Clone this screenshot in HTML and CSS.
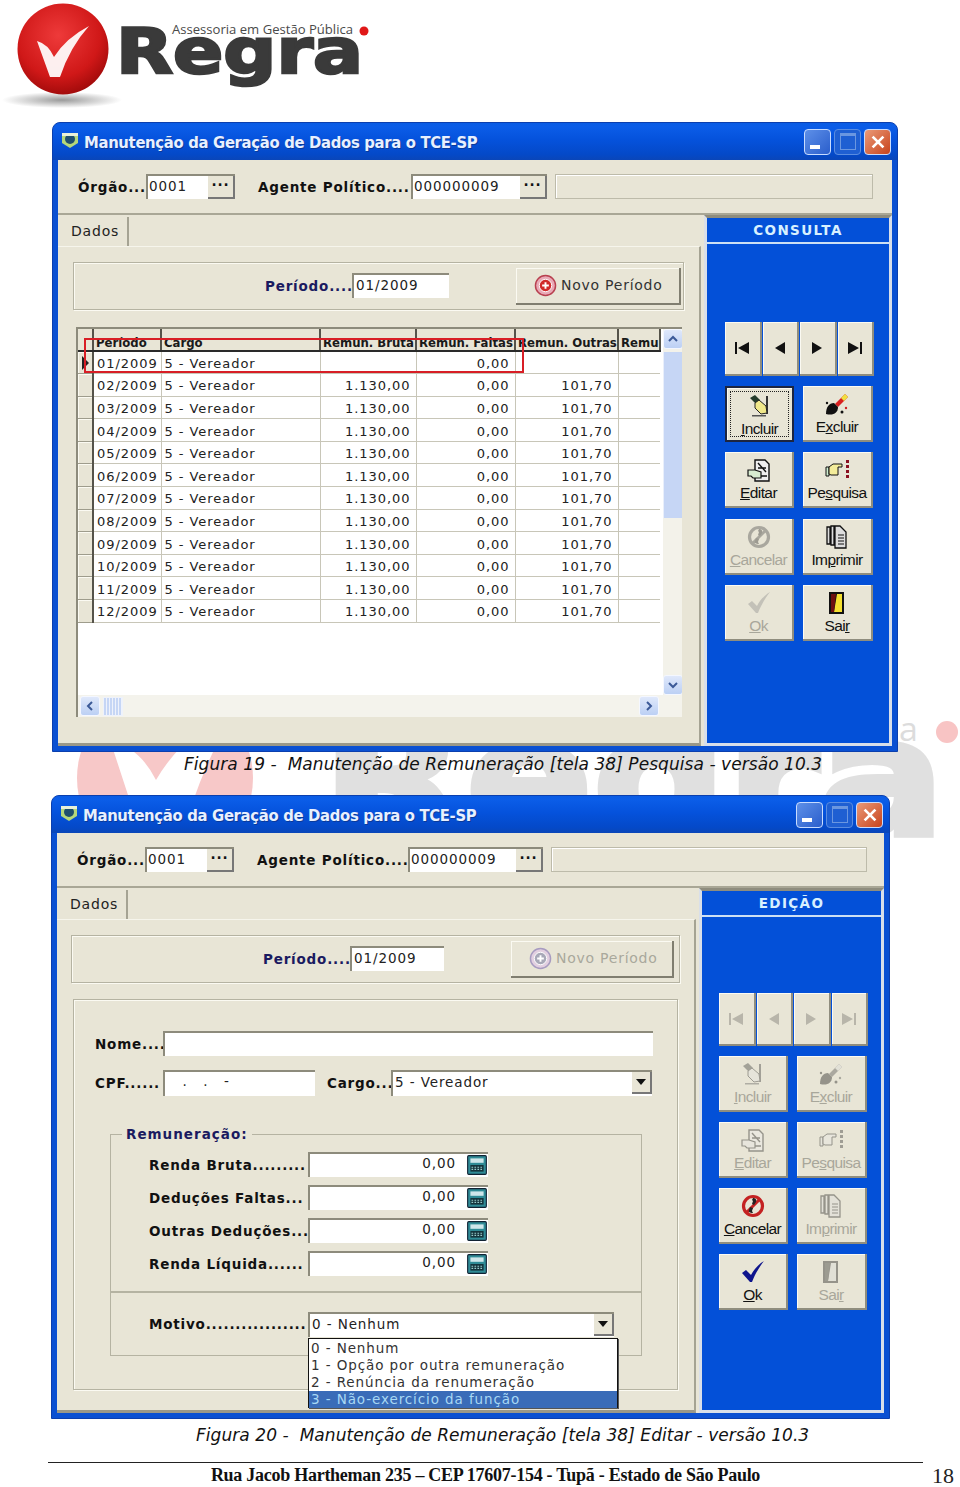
FILE: index.html
```html
<!DOCTYPE html>
<html lang="pt-BR">
<head>
<meta charset="utf-8">
<title>Manutenção de Remuneração</title>
<link rel="stylesheet" href="styles.css">
</head>
<body>
<svg class="defs" width="0" height="0" aria-hidden="true">
  <defs>
    <radialGradient id="sphere" cx="45%" cy="35%" r="70%"><stop offset="0" stop-color="#ee3a3a"/><stop offset=".65" stop-color="#d01818"/><stop offset="1" stop-color="#980808"/></radialGradient>
    <radialGradient id="shade" cx="50%" cy="50%" r="50%"><stop offset="0" stop-color="#9a9a9a"/><stop offset="1" stop-color="#fff"/></radialGradient>
    <symbol id="i-first" viewBox="0 0 16 14"><path d="M1 1h2v12H1z M15 1v12L4 7z" fill="#111"/></symbol>
    <symbol id="i-prev" viewBox="0 0 16 14"><path d="M13 1v12L3 7z" fill="#111"/></symbol>
    <symbol id="i-next" viewBox="0 0 16 14"><path d="M3 1v12l10-6z" fill="#111"/></symbol>
    <symbol id="i-last" viewBox="0 0 16 14"><path d="M13 1h2v12h-2z M1 1v12l11-6z" fill="#111"/></symbol>
    <symbol id="i-incluir" viewBox="0 0 24 24"><path d="M18 2h2v18h-2z" fill="#333"/><path d="M2 4l5-3 5 5-4 4z" fill="#243c2c"/><path d="M7 9l4-3 7 6 1 7-6 1-6-6z" fill="#f0e88a" stroke="#222" stroke-width="1"/><path d="M4 21h14v1.500H4z" fill="#555"/></symbol>
    <symbol id="i-excluir" viewBox="0 0 24 24"><path d="M10 12l10-10 3 3-10 10z" fill="#d82020"/><path d="M16 6l4-4 3 3-4 4z" fill="#f0e040"/><path d="M1 22c0-7 3-11 8-11l4 4c0 6-5 9-12 7z" fill="#111"/><circle cx="17" cy="20" r="1.500" fill="#111"/><circle cx="21" cy="16" r="1.200" fill="#c22"/><circle cx="2" cy="11" r="1.200" fill="#111"/></symbol>
    <symbol id="i-editar" viewBox="0 0 24 24"><path d="M8 2h10l4 4v17H8z" fill="#eee" stroke="#111" stroke-width="1.400"/><path d="M11 5l8 9M11 10h8M13 18h7" stroke="#111" stroke-width="1.400"/><path d="M1 12h7l6 2v6H6l-2-2H1z" fill="#d8ecd0" stroke="#111" stroke-width="1.200"/></symbol>
    <symbol id="i-pesquisa" viewBox="0 0 24 24"><path d="M1 9h3v9H1z" fill="#d0eed0" stroke="#111"/><path d="M4 9l4-3h9v3h-4v8H6l-2-1z" fill="#f3ec9a" stroke="#111"/><path d="M21 2h3v3h-3zM21 7h3v3h-3zM21 12h3v3h-3zM21 17h3v3h-3z" fill="#8a1020"/></symbol>
    <symbol id="i-cancelar" viewBox="0 0 24 24"><circle cx="12" cy="12" r="9.500" fill="none" stroke="#c42222" stroke-width="3.200"/><path d="M5 19L19 5" stroke="#c42222" stroke-width="3"/><path d="M12 4c2 0 4 1 3 4l-2 3-2-1 1-3-1-1zM9 13l3 1-1 3 1 2c-3 0-5-1-4-3z" fill="#222"/></symbol>
    <symbol id="i-imprimir" viewBox="0 0 24 24"><path d="M2 2h3v17H2zM6 1h3v19H6zM10 1h5l6 6v16H10z" fill="#ddd" stroke="#111" stroke-width="1.300"/><path d="M13 10h6M13 13h6M13 16h6M13 19h6" stroke="#111" stroke-width="1.200"/></symbol>
    <symbol id="i-ok" viewBox="0 0 24 24"><path d="M1 13l4-3 5 5C13 9 18 4 23 1c-4 5-9 13-12 21h-2z" fill="currentColor"/></symbol>
    <symbol id="i-sair" viewBox="0 0 24 24"><path d="M4 1h15v22H4z" fill="#111"/><path d="M12 3h5v18h-8z" fill="#f5e030"/><path d="M6 3h5l-2 18H6z" fill="#6e1010"/></symbol>
    <symbol id="i-calc" viewBox="0 0 20 20"><rect x="1.500" y="1.500" width="17" height="17" rx="1" fill="#2f8b96" stroke="#123"/><rect x="4" y="4" width="12" height="4" fill="#cfe6ea"/><rect x="4" y="10" width="12" height="6" fill="#14343c"/><path d="M5 12h10M5 14h10" stroke="#9cc" stroke-dasharray="1.500 1.200"/></symbol>
    <symbol id="i-novo" viewBox="0 0 24 24"><circle cx="12" cy="12" r="10.500" fill="#e9a9b6" stroke="#b8404f" stroke-width="1.500"/><circle cx="12" cy="12" r="6.500" fill="#d02a2a" stroke="#fff" stroke-width="1"/><path d="M12 8.500v7M8.500 12h7" stroke="#fff" stroke-width="2"/></symbol>
    <symbol id="i-novo-off" viewBox="0 0 24 24"><circle cx="12" cy="12" r="10.500" fill="#e2cfe0" stroke="#a79bc0" stroke-width="1.500"/><circle cx="12" cy="12" r="6.500" fill="#a8a8b8" stroke="#fff" stroke-width="1"/><path d="M12 8.500v7M8.500 12h7" stroke="#fff" stroke-width="2"/></symbol>
    <symbol id="i-app" viewBox="0 0 18 18"><path d="M1 2h16v10l-8 5-8-5z" fill="#b5d77a"/><circle cx="9" cy="8" r="5" fill="#1f4f6e"/><path d="M1 2h16v3H1z" fill="#e8f0d8"/></symbol>
    <symbol id="i-up" viewBox="0 0 12 12"><path d="M2 8l4-4 4 4" fill="none" stroke="#3c5a98" stroke-width="2"/></symbol>
    <symbol id="i-down" viewBox="0 0 12 12"><path d="M2 4l4 4 4-4" fill="none" stroke="#3c5a98" stroke-width="2"/></symbol>
    <symbol id="i-left" viewBox="0 0 12 12"><path d="M8 2L4 6l4 4" fill="none" stroke="#3c5a98" stroke-width="2"/></symbol>
    <symbol id="i-right" viewBox="0 0 12 12"><path d="M4 2l4 4-4 4" fill="none" stroke="#3c5a98" stroke-width="2"/></symbol>
  </defs>
</svg>

<svg class="watermark" width="960" height="860" viewBox="0 0 960 860" aria-hidden="true">
  <circle cx="165" cy="778" r="88" fill="#f7c8c8"/>
  <path d="M110 740Q140 748 156 780Q182 735 242 700Q202 760 178 850H146z" fill="#fff"/>
  <text class="wm-word" x="322" y="835" textLength="623" lengthAdjust="spacingAndGlyphs">Regra</text>
  <text class="wm-tag" x="448" y="741" textLength="470" lengthAdjust="spacingAndGlyphs">Assessoria em Gestão Pública</text>
  <circle cx="947" cy="732" r="11" fill="#f8c4c4"/>
</svg>

<header class="logo">
  <svg width="380" height="122" viewBox="0 0 380 122" role="img" aria-label="Regra">
    <ellipse cx="62" cy="100" rx="60" ry="8" fill="url(#shade)"/>
    <circle cx="63" cy="49" r="45.500" fill="url(#sphere)"/>
    <path d="M37 41Q48 44 54 57Q66 38 89 26Q70 47 60 77H50z" fill="#fff" opacity=".93"/>
    <text class="logo-word" x="116" y="73" textLength="247" lengthAdjust="spacingAndGlyphs">Regra</text>
    <text class="logo-tag" x="172" y="34" textLength="181" lengthAdjust="spacingAndGlyphs">Assessoria em Gestão Pública</text>
    <circle cx="364" cy="31" r="4.500" fill="#e01818"/>
  </svg>
</header>

<main class="page">
  <section class="win win-a">
    <div class="titlebar">
      <svg class="app-ico"><use href="#i-app"/></svg>
      <span class="title">Manutenção da Geração de Dados para o TCE-SP</span>
      <div class="ctrls">
        <span class="ctrl ctrl-min"></span><span class="ctrl ctrl-max"></span><span class="ctrl ctrl-close"><svg viewBox="0 0 20 20" width="18" height="18"><path d="M4 4l12 12M16 4L4 16" stroke="#fff" stroke-width="3"/></svg></span>
      </div>
    </div>
    <div class="client">
      <div class="toolbar">
        <span class="lbl lbl-org">Órgão...</span>
        <span class="field field-org"><span class="field-text">0001</span><span class="dots">···</span></span>
        <span class="lbl lbl-agente">Agente Político....</span>
        <span class="field field-ag"><span class="field-text">000000009</span><span class="dots">···</span></span>
        <span class="info"></span>
      </div>
      <div class="main">
        <div class="left">
          <div class="tabs"><span class="tab">Dados</span></div>
          <div class="tabpage">
            <div class="period">
              <span class="lbl lbl-per">Período....</span>
              <span class="input input-per">01/2009</span>
              <span class="novo"><svg class="novo-ico"><use href="#i-novo"/></svg>Novo Período</span>
            </div>
            <div class="grid">
              <div class="grid-body">
                <table class="tbl">
                  <colgroup><col class="c0"><col class="c1"><col class="c2"><col class="c3"><col class="c4"><col class="c5"><col class="c6"></colgroup>
                  <thead><tr><th></th><th>Período</th><th>Cargo</th><th>Remun. Bruta</th><th>Remun. Faltas</th><th>Remun. Outras</th><th>Remu</th></tr></thead>
                  <tbody>
                    <tr><th class="ind ind-on"></th><td>01/2009</td><td>5 - Vereador</td><td class="n"></td><td class="n">0,00</td><td class="n"></td><td></td></tr>
                    <tr><th class="ind"></th><td>02/2009</td><td>5 - Vereador</td><td class="n">1.130,00</td><td class="n">0,00</td><td class="n">101,70</td><td></td></tr>
                    <tr><th class="ind"></th><td>03/2009</td><td>5 - Vereador</td><td class="n">1.130,00</td><td class="n">0,00</td><td class="n">101,70</td><td></td></tr>
                    <tr><th class="ind"></th><td>04/2009</td><td>5 - Vereador</td><td class="n">1.130,00</td><td class="n">0,00</td><td class="n">101,70</td><td></td></tr>
                    <tr><th class="ind"></th><td>05/2009</td><td>5 - Vereador</td><td class="n">1.130,00</td><td class="n">0,00</td><td class="n">101,70</td><td></td></tr>
                    <tr><th class="ind"></th><td>06/2009</td><td>5 - Vereador</td><td class="n">1.130,00</td><td class="n">0,00</td><td class="n">101,70</td><td></td></tr>
                    <tr><th class="ind"></th><td>07/2009</td><td>5 - Vereador</td><td class="n">1.130,00</td><td class="n">0,00</td><td class="n">101,70</td><td></td></tr>
                    <tr><th class="ind"></th><td>08/2009</td><td>5 - Vereador</td><td class="n">1.130,00</td><td class="n">0,00</td><td class="n">101,70</td><td></td></tr>
                    <tr><th class="ind"></th><td>09/2009</td><td>5 - Vereador</td><td class="n">1.130,00</td><td class="n">0,00</td><td class="n">101,70</td><td></td></tr>
                    <tr><th class="ind"></th><td>10/2009</td><td>5 - Vereador</td><td class="n">1.130,00</td><td class="n">0,00</td><td class="n">101,70</td><td></td></tr>
                    <tr><th class="ind"></th><td>11/2009</td><td>5 - Vereador</td><td class="n">1.130,00</td><td class="n">0,00</td><td class="n">101,70</td><td></td></tr>
                    <tr><th class="ind"></th><td>12/2009</td><td>5 - Vereador</td><td class="n">1.130,00</td><td class="n">0,00</td><td class="n">101,70</td><td></td></tr>
                  </tbody>
                </table>
                <div class="vscroll">
                  <span class="sb"><svg class="sb-ico"><use href="#i-up"/></svg></span>
                  <span class="v-thumb"></span>
                  <span class="v-rest"></span>
                  <span class="sb"><svg class="sb-ico"><use href="#i-down"/></svg></span>
                </div>
              </div>
              <div class="hscroll">
                <span class="sb"><svg class="sb-ico"><use href="#i-left"/></svg></span>
                <span class="h-thumb"></span>
                <span class="h-rest"></span>
                <span class="sb"><svg class="sb-ico"><use href="#i-right"/></svg></span>
              </div>
              <span class="redbox"></span>
            </div>
          </div>
        </div>
        <aside class="side">
          <div class="side-head">CONSULTA</div>
          <div class="nav">
            <span class="nbtn"><svg class="nav-ico"><use href="#i-first"/></svg></span><span class="nbtn"><svg class="nav-ico"><use href="#i-prev"/></svg></span><span class="nbtn"><svg class="nav-ico"><use href="#i-next"/></svg></span><span class="nbtn"><svg class="nav-ico"><use href="#i-last"/></svg></span>
          </div>
          <div class="actions">
            <span class="btn btn-focus"><svg class="ico"><use href="#i-incluir"/></svg><span><u>I</u>ncluir</span></span>
            <span class="btn"><svg class="ico"><use href="#i-excluir"/></svg><span>E<u>x</u>cluir</span></span>
            <span class="btn"><svg class="ico"><use href="#i-editar"/></svg><span><u>E</u>ditar</span></span>
            <span class="btn"><svg class="ico"><use href="#i-pesquisa"/></svg><span>Pe<u>s</u>quisa</span></span>
            <span class="btn off"><svg class="ico"><use href="#i-cancelar"/></svg><span><u>C</u>ancelar</span></span>
            <span class="btn"><svg class="ico"><use href="#i-imprimir"/></svg><span>Im<u>p</u>rimir</span></span>
            <span class="btn off"><svg class="ico"><use href="#i-ok"/></svg><span><u>O</u>k</span></span>
            <span class="btn"><svg class="ico"><use href="#i-sair"/></svg><span>Sai<u>r</u></span></span>
          </div>
        </aside>
      </div>
    </div>
  </section>
  <p class="caption cap-a">Figura 19 -  Manutenção de Remuneração [tela 38] Pesquisa - versão 10.3</p>

  <section class="win win-b">
    <div class="titlebar">
      <svg class="app-ico"><use href="#i-app"/></svg>
      <span class="title">Manutenção da Geração de Dados para o TCE-SP</span>
      <div class="ctrls">
        <span class="ctrl ctrl-min"></span><span class="ctrl ctrl-max"></span><span class="ctrl ctrl-close"><svg viewBox="0 0 20 20" width="18" height="18"><path d="M4 4l12 12M16 4L4 16" stroke="#fff" stroke-width="3"/></svg></span>
      </div>
    </div>
    <div class="client">
      <div class="toolbar">
        <span class="lbl lbl-org">Órgão...</span>
        <span class="field field-org"><span class="field-text">0001</span><span class="dots">···</span></span>
        <span class="lbl lbl-agente">Agente Político....</span>
        <span class="field field-ag"><span class="field-text">000000009</span><span class="dots">···</span></span>
        <span class="info"></span>
      </div>
      <div class="main">
        <div class="left">
          <div class="tabs"><span class="tab">Dados</span></div>
          <div class="tabpage">
            <div class="period">
              <span class="lbl lbl-per">Período....</span>
              <span class="input input-per">01/2009</span>
              <span class="novo novo-off"><svg class="novo-ico"><use href="#i-novo-off"/></svg>Novo Período</span>
            </div>
            <div class="form">
              <div class="frow frow-nome"><span class="flbl">Nome....</span><span class="input input-nome"></span></div>
              <div class="frow frow-cpf">
                <span class="flbl">CPF......</span><span class="input input-cpf">&nbsp; &nbsp;.&nbsp; &nbsp;.&nbsp; &nbsp;-</span>
                <span class="flbl flbl-cargo">Cargo...</span><span class="input combo combo-cargo">5 - Vereador<span class="arrow"></span></span>
              </div>
              <fieldset class="rem">
                <legend class="rem-leg">Remuneração:</legend>
                <div class="rrow"><span class="rlbl">Renda Bruta.........</span><span class="input money">0,00<svg class="calc"><use href="#i-calc"/></svg></span></div>
                <div class="rrow"><span class="rlbl">Deduções Faltas...</span><span class="input money">0,00<svg class="calc"><use href="#i-calc"/></svg></span></div>
                <div class="rrow"><span class="rlbl">Outras Deduções...</span><span class="input money">0,00<svg class="calc"><use href="#i-calc"/></svg></span></div>
                <div class="rrow"><span class="rlbl">Renda Líquida......</span><span class="input money">0,00<svg class="calc"><use href="#i-calc"/></svg></span></div>
              </fieldset>
              <div class="motivo">
                <span class="rlbl">Motivo.................</span>
                <span class="input combo combo-mot">0 - Nenhum<span class="arrow"></span></span>
                <ul class="drop">
                  <li>0 - Nenhum</li>
                  <li>1 - Opção por outra remuneração</li>
                  <li>2 - Renúncia da renumeração</li>
                  <li class="sel">3 - Não-exercício da função</li>
                </ul>
              </div>
            </div>
          </div>
        </div>
        <aside class="side">
          <div class="side-head">EDIÇÃO</div>
          <div class="nav nav-off">
            <span class="nbtn"><svg class="nav-ico"><use href="#i-first"/></svg></span><span class="nbtn"><svg class="nav-ico"><use href="#i-prev"/></svg></span><span class="nbtn"><svg class="nav-ico"><use href="#i-next"/></svg></span><span class="nbtn"><svg class="nav-ico"><use href="#i-last"/></svg></span>
          </div>
          <div class="actions">
            <span class="btn off"><svg class="ico"><use href="#i-incluir"/></svg><span><u>I</u>ncluir</span></span>
            <span class="btn off"><svg class="ico"><use href="#i-excluir"/></svg><span>E<u>x</u>cluir</span></span>
            <span class="btn off"><svg class="ico"><use href="#i-editar"/></svg><span><u>E</u>ditar</span></span>
            <span class="btn off"><svg class="ico"><use href="#i-pesquisa"/></svg><span>Pe<u>s</u>quisa</span></span>
            <span class="btn"><svg class="ico"><use href="#i-cancelar"/></svg><span><u>C</u>ancelar</span></span>
            <span class="btn off"><svg class="ico"><use href="#i-imprimir"/></svg><span>Im<u>p</u>rimir</span></span>
            <span class="btn btn-ok"><svg class="ico"><use href="#i-ok"/></svg><span><u>O</u>k</span></span>
            <span class="btn off"><svg class="ico"><use href="#i-sair"/></svg><span>Sai<u>r</u></span></span>
          </div>
        </aside>
      </div>
    </div>
  </section>
  <p class="caption cap-b">Figura 20 -  Manutenção de Remuneração [tela 38] Editar - versão 10.3</p>
</main>

<footer class="foot">
  <span class="foot-addr">Rua Jacob Hartheman 235 – CEP 17607-154 - Tupã - Estado de São Paulo</span>
  <span class="foot-page">18</span>
</footer>
</body>
</html>
```
FILE: styles.css
```css
* { box-sizing: border-box; }
html, body { margin: 0; padding: 0; background: #fff; }
body { width: 960px; height: 1487px; position: relative; overflow: hidden; font-family: "DejaVu Sans", sans-serif; color: #111; }
.defs { position: absolute; }
.watermark { position: absolute; left: 0; top: 0; z-index: 0; }
.wm-word { font: 700 164px "DejaVu Sans", sans-serif; fill: #e0e0e0; stroke: #e0e0e0; stroke-width: 6px; }
.wm-tag { font: 32px "Open Sans", sans-serif; fill: #dcdcdc; }

.logo { position: relative; height: 122px; z-index: 1; }
.logo svg { display: block; }
.logo-word { font: 700 63px "DejaVu Sans", sans-serif; fill: #3a3a3a; stroke: #3a3a3a; stroke-width: 2.5px; stroke-linejoin: miter; }
.logo-tag { font: 12.5px "Open Sans", sans-serif; fill: #4a4a4a; }

.page { position: relative; z-index: 1; }

.win { display: flex; flex-direction: column; background: #0a50d2; border: 1px solid #0b3fae; border-radius: 8px 8px 0 0; padding: 0 5px 5px; }
.win-a { width: 846px; height: 630px; margin-left: 52px; --l-ag: 153px; --w-ag: 136px; --w-info: 318px; --w-left: 643px; --w-per: 611px; --m-per: 15px; --w-input: 97px; --w-novo: 165px; --side-pad: 18px; --nav-top: 78px; --nav-h: 54px; --row-gap: 10.3px; }
.win-b { width: 839px; height: 624px; margin-left: 51px; --l-ag: 151px; --w-ag: 135px; --w-info: 316px; --w-left: 639px; --w-per: 609px; --m-per: 14px; --w-input: 94px; --w-novo: 163px; --side-pad: 17px; --nav-top: 76px; --nav-h: 53px; --row-gap: 10px; }

.titlebar { display: flex; align-items: center; height: 37px; margin: 0 -5px; padding: 0 6px 0 8px; border-radius: 7px 7px 0 0; background: linear-gradient(#0a5ce4 0, #0b5de8 10%, #0552dc 45%, #0449c8 85%, #0a46b8 100%); }
.app-ico { width: 18px; height: 18px; margin-right: 5px; margin-top: -3px; }
.title { font: 700 16.5px "DejaVu Sans", sans-serif; font-stretch: condensed; letter-spacing: -.33px; color: #e8f0ff; text-shadow: 1px 1px 0 #0a3a9a; white-space: nowrap; padding-top: 2px; }
.ctrls { margin-left: auto; display: flex; gap: 3px; }
.ctrl { width: 27px; height: 26px; border: 1px solid #c8dcff; border-radius: 4px; display: flex; align-items: center; justify-content: center; background: #3f78dc; position: relative; }
.ctrl-min { background: linear-gradient(135deg, #5e90e8, #2a5ecc); }
.ctrl-min::after { content: ""; position: absolute; left: 5px; bottom: 5px; width: 10px; height: 4px; background: #fff; }
.ctrl-max { background: #1f5fd2; border-color: #5a8ce0; }
.ctrl-max::after { content: ""; width: 14px; height: 13px; border: 1px solid #6a96e0; border-top-width: 3px; }
.ctrl-close { background: linear-gradient(135deg, #ea9a78, #c8431c); }

.client { flex: 1; display: flex; flex-direction: column; background: #e8e5d6; min-height: 0; }
.toolbar { display: flex; align-items: center; height: 55px; padding-left: 20px; border-bottom: 2px solid #a9a796; flex: none; }
.lbl { font-weight: 700; font-size: 13.5px; letter-spacing: .8px; white-space: nowrap; }
.lbl-org { width: 68px; padding-top: 1px; }
.lbl-agente { width: var(--l-ag); margin-left: 23px; padding-top: 1px; }
.field { display: flex; height: 25px; background: #fff; border-top: 2px solid #8d8b7c; border-left: 2px solid #8d8b7c; font-size: 13.5px; letter-spacing: .9px; }
.field-org { width: 89px; }
.field-ag { width: var(--w-ag); }
.field-text { flex: 1; padding-left: 1px; line-height: 20px; color: #222; }
.dots { width: 27px; background: #e8e5d6; border-right: 2px solid #777; border-bottom: 2px solid #777; text-align: center; font-weight: 700; line-height: 18px; }
.info { width: var(--w-info); height: 25px; margin-left: 8px; border: 1px solid #bdbbaa; box-shadow: inset 1px 1px 0 #fff; }

.main { flex: 1; display: flex; min-height: 0; }
.left { width: var(--w-left); display: flex; flex-direction: column; flex: none; }
.tabs { height: 31px; flex: none; padding-top: 2px; }
.tab { display: block; width: 71px; height: 29px; border-right: 2px solid #a5a393; color: #222; font-size: 14px; letter-spacing: .8px; padding: 6px 0 0 13px; }
.tabpage { flex: 1; border-top: 1px solid #f6f5ec; border-right: 2px solid #a5a393; border-bottom: 3px solid #9a9888; padding-top: 15px; }

.period { display: flex; align-items: center; width: var(--w-per); height: 48px; margin-left: var(--m-per); padding-left: 191px; border: 1px solid #b5b3a2; box-shadow: inset 1px 1px 0 #fbfaf2, 1px 1px 0 #fbfaf2; }
.lbl-per { width: 87px; color: #1a1a60; }
.input { display: block; height: 25px; background: #fff; border-top: 2px solid #8d8b7c; border-left: 2px solid #8d8b7c; font-size: 13.5px; letter-spacing: .9px; line-height: 18px; color: #222; padding-left: 2px; white-space: nowrap; position: relative; }
.input-per { width: var(--w-input); margin-top: -2px; line-height: 20px; }
.novo { display: flex; align-items: center; width: var(--w-novo); height: 37px; margin-left: 67px; padding-left: 18px; background: #e8e5d6; border-right: 2px solid #807e70; border-bottom: 2px solid #807e70; box-shadow: inset 1px 1px 0 #fbfaf2; font-size: 14px; letter-spacing: .75px; color: #333; white-space: nowrap; }
.novo-off { color: #a9a89c; }
.novo-ico { width: 23px; height: 23px; margin-right: 4px; flex: none; }

.grid { position: relative; width: 606px; height: 390px; margin: 17px 0 0 18px; border-top: 2px solid #8d8b7c; border-left: 2px solid #8d8b7c; background: #fff; display: flex; flex-direction: column; overflow: hidden; }
.grid-body { flex: 1; display: flex; min-height: 0; }
.tbl { width: 582px; table-layout: fixed; border-collapse: collapse; align-self: flex-start; font-size: 13px; letter-spacing: .95px; color: #222; }
.c0 { width: 15px; } .c1 { width: 68px; } .c2 { width: 159px; } .c3 { width: 96px; } .c4 { width: 99px; } .c5 { width: 103px; } .c6 { width: 42px; }
.tbl thead th { height: 22px; padding: 0 0 0 2px; background: #e8e5d6; border-right: 2px solid #55534a; border-bottom: 2px solid #2a2a2a; font-size: 13px; font-stretch: condensed; letter-spacing: 0; font-weight: 700; text-align: left; white-space: nowrap; overflow: hidden; line-height: 15px; vertical-align: bottom; color: #1a1a1a; }
.tbl tbody tr { height: 22.6px; }
.tbl td { padding: 2px 0 0 3px; border-right: 1px solid #c8c6b8; border-bottom: 1px solid #c8c6b8; white-space: nowrap; overflow: hidden; line-height: 17px; }
.tbl td:last-child { border-right: 0; }
.tbl td.n { text-align: right; padding-right: 5px; }
.ind { padding: 0; background: #e8e5d6; border-right: 2px solid #55534a; border-bottom: 1px solid #9e9c8c; box-shadow: inset 1px 1px 0 #fbfaf2; position: relative; }
.ind-on::after { content: ""; position: absolute; left: 4px; top: 4px; border-left: 7px solid #222; border-top: 7px solid transparent; border-bottom: 7px solid transparent; }
.vscroll { width: 21px; margin-left: 2px; display: flex; flex-direction: column; background: #f3f2ea; }
.sb { display: flex; align-items: center; justify-content: center; width: 20px; height: 20px; flex: none; background: linear-gradient(#dfe8fb, #bcd0f4); border: 1px solid #f4f7ff; border-radius: 3px; }
.sb-ico { width: 12px; height: 12px; }
.v-thumb { height: 166px; margin-top: 3px; flex: none; background: #c6d6f5; border-left: 1px solid #e9effb; }
.v-rest { flex: 1; }
.hscroll { height: 22px; flex: none; display: flex; align-items: center; padding-left: 2px; background: #f4f3ec; }
.h-thumb { width: 20px; height: 19px; margin-left: 3px; background: repeating-linear-gradient(90deg, #c6d6f5 0 2px, #eef2fb 2px 3px); border: 1px solid #eef2fb; }
.h-rest { width: 516px; }
.redbox { position: absolute; left: 6px; top: 9px; width: 440px; height: 35px; border: 2px solid #d81e26; }

.side { flex: 1; margin-left: 3px; display: flex; flex-direction: column; background: #0350d8; border: 3px solid #d9dfe9; border-top-color: #8f8d7e; border-bottom-color: #d9dfe9; }
.side-head { height: 26px; flex: none; background: #0350d8; border-bottom: 2px solid #cde0f4; color: #d8f0ff; font-weight: 700; font-size: 13.5px; letter-spacing: 1.4px; text-align: center; line-height: 24px; }
.nav { display: flex; gap: 1px; margin: var(--nav-top) 0 0 var(--side-pad); height: var(--nav-h); flex: none; }
.nbtn { width: 36.5px; display: flex; align-items: center; justify-content: center; background: #e8e5d6; border-right: 2px solid #8f8d7e; border-bottom: 2px solid #8f8d7e; box-shadow: inset 1px 1px 0 #fbfaf2; }
.nav-ico { width: 16px; height: 14px; }
.nav-off .nav-ico { opacity: .22; }
.actions { display: grid; grid-template-columns: 69px 70px; column-gap: 9px; grid-auto-rows: 56px; row-gap: var(--row-gap); margin: 10px 0 0 var(--side-pad); }
.btn { display: flex; flex-direction: column; align-items: center; background: #e8e5d6; border-right: 2px solid #8f8d7e; border-bottom: 2px solid #8f8d7e; box-shadow: inset 1px 1px 0 #fbfaf2; padding-top: 6px; font: 15.5px "Liberation Sans", sans-serif; letter-spacing: -.6px; color: #111; white-space: nowrap; }
.btn .ico { width: 24px; height: 24px; margin-bottom: 2px; color: #888; flex: none; }
.btn-ok .ico { color: #0e148c; }
.btn.off { color: #a8a79b; }
.btn.off .ico { filter: grayscale(1); opacity: .38; }
.btn-focus { outline: 1px dotted #222; outline-offset: -6px; border: 2px solid #1d2540; }

.caption { margin: 0; height: 43px; font: oblique 17px "DejaVu Sans", sans-serif; white-space: pre; color: #111; position: relative; letter-spacing: .06px; }
.cap-a { padding: 2px 0 0 184px; }
.cap-b { padding: 6px 0 0 196px; }

.form { width: 605px; height: 391px; margin: 16px 0 0 16px; border: 1px solid #b5b3a2; box-shadow: inset 1px 1px 0 #fbfaf2, 1px 1px 0 #fbfaf2; padding: 31px 0 0 21px; }
.frow { display: flex; align-items: center; height: 25px; }
.frow-cpf { margin-top: 14px; height: 26px; }
.flbl { width: 68px; font-weight: 700; font-size: 13.5px; letter-spacing: .8px; white-space: nowrap; flex: none; }
.flbl-cargo { width: 64px; margin-left: 12px; }
.input-nome { width: 490px; }
.input-cpf { width: 152px; height: 26px; }
.combo-cargo { width: 261px; height: 26px; line-height: 20px; }
.arrow { position: absolute; right: 0; top: 0; width: 20px; height: 22px; background: #e8e5d6; border-right: 2px solid #777; border-bottom: 2px solid #777; display: flex; align-items: center; justify-content: center; }
.arrow::after { content: ""; border-top: 6px solid #111; border-left: 5px solid transparent; border-right: 5px solid transparent; }
.rem { width: 532px; height: 167px; margin: 30px 0 0 15px; padding: 6px 0 0 38px; border: 1px solid #b5b3a2; border-bottom: 2px solid #b5b3a2; position: relative; min-width: 0; }
.rem-leg { padding: 0 4px; margin-left: -27px; font-weight: 700; font-size: 13.5px; letter-spacing: 1px; color: #1a1a60; }
.rrow { display: flex; align-items: center; height: 33px; }
.rlbl { width: 159px; flex: none; font-weight: 700; font-size: 13.5px; letter-spacing: .8px; white-space: nowrap; }
.money { width: 180px; text-align: right; padding-right: 32px; }
.calc { position: absolute; right: 0; top: 0; width: 22px; height: 22px; }
.motivo { position: relative; display: flex; align-items: center; width: 532px; height: 63px; margin-left: 15px; padding: 0 0 0 38px; border: 1px solid #b5b3a2; border-top: 0; }
.combo-mot { width: 306px; line-height: 20px; }
.drop { position: absolute; left: 197px; top: 45px; width: 310px; height: 70px; margin: 0; padding: 1px 0 0 2px; list-style: none; background: #fff; border: 1px solid #111; box-shadow: 1px 1px 0 #555; font-size: 13.5px; letter-spacing: .9px; color: #333; z-index: 2; }
.drop li { height: 17px; line-height: 17px; white-space: nowrap; }
.drop .sel { background: #3a6cb8; color: #a8d8f4; margin-left: -2px; padding-left: 2px; }

.foot { position: absolute; left: 48px; top: 1462px; width: 912px; display: flex; }
.foot-addr { width: 875px; height: 25px; border-top: 1px solid #222; text-align: center; font: 700 18px "Liberation Serif", serif; letter-spacing: -.27px; padding-top: 2px; color: #111; }
.foot-page { margin-left: 9px; font: 22px "Liberation Serif", serif; color: #222; padding-top: 1px; }
```
